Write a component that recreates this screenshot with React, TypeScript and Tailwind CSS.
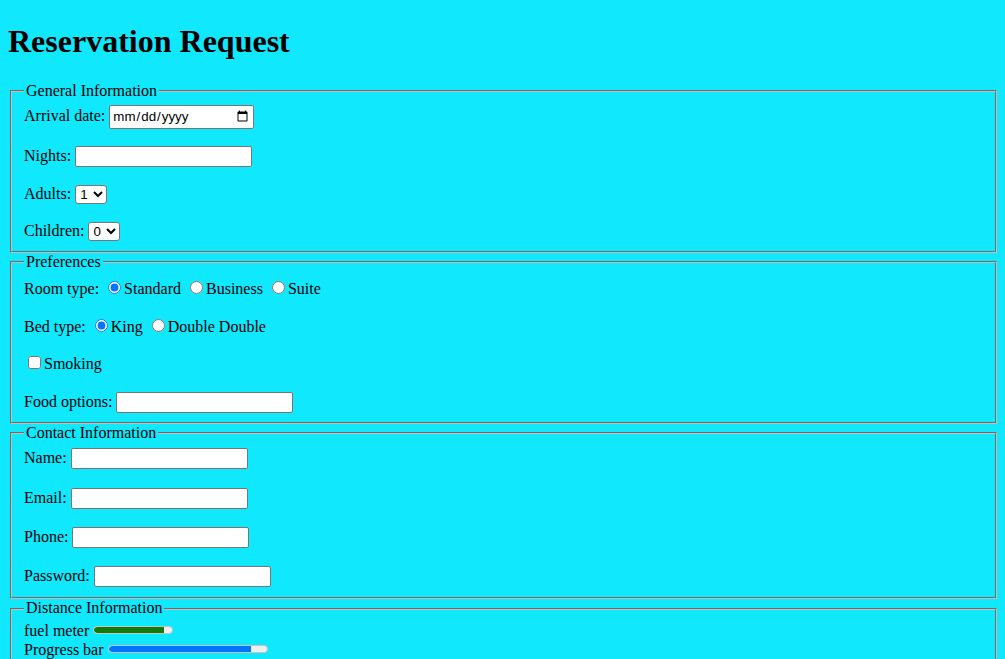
import React from 'react';

const textInput =
  "h-[21px] w-[177px] rounded-[2px] border border-[#767676] bg-white px-[2px] py-px align-baseline font-['Liberation_Sans',Arial,sans-serif] text-[13.333px]";
const selectBox =
  "h-[19px] w-[32px] rounded-[3px] border border-[#767676] bg-white align-baseline font-['Liberation_Sans',Arial,sans-serif] text-[13.333px]";
const fieldsetCls = "ml-[2px] border-2 border-[#c0c0c0] [border-style:groove] px-3";
const radioCls = "mt-[3px] mr-[3px] ml-[5px] align-baseline";

// the empty line left by <br><br> between rows
const Blank = ({ h = 'h-[18.4px]' }: { h?: string }) => <div className={h} />;

// meter / progress drawn as plain bars, native look
const Bar = ({ width, fill, pct }: { width: string; fill: string; pct: number }) => (
  <span
    className={`inline-block h-[8px] ${width} overflow-hidden rounded-full border border-[#c4c4c4] bg-[#efefef] align-[2px]`}
  >
    <span className={`block h-full rounded-l-full ${fill}`} style={{ width: `${pct}%` }} />
  </span>
);

export default function App() {
  return (
    <div className="min-h-screen bg-[#10e8fe] px-2 pt-[23.44px] font-['Liberation_Serif','Times_New_Roman',serif] text-base leading-normal text-black">
      <h1 className="mb-[21.44px] text-[32px] font-bold leading-[1.15]">Reservation Request</h1>
      <form className="leading-[1.15]">
        <fieldset className={`${fieldsetCls} pt-[4.6px] pb-[10px]`}>
          <legend className="px-[2px]">General Information</legend>
          <div>
            <label>Arrival date: </label>
            <input
              type="date"
              className="h-[24px] w-[145px] rounded-[2px] border border-[#767676] bg-white px-[2px] align-baseline font-['Liberation_Sans',Arial,sans-serif] text-[13.333px]"
            />
          </div>
          <Blank h="h-[17.4px]" />
          <div>
            <label>Nights: </label>
            <input type="text" className={textInput} />
          </div>
          <Blank />
          <div>
            <label>Adults: </label>
            <select className={selectBox} defaultValue="1">
              <option>1</option>
              <option>2</option>
              <option>3</option>
              <option>4</option>
            </select>
          </div>
          <Blank h="h-[17.4px]" />
          <div>
            <label>Children: </label>
            <select className={selectBox} defaultValue="0">
              <option>0</option>
              <option>1</option>
              <option>2</option>
              <option>3</option>
            </select>
          </div>
        </fieldset>

        <fieldset className={`${fieldsetCls} pt-[6.6px] pb-[9px]`}>
          <legend className="px-[2px]">Preferences</legend>
          <div>
            Room type: <input type="radio" name="room" defaultChecked className={radioCls} />Standard{' '}
            <input type="radio" name="room" className={radioCls} />Business{' '}
            <input type="radio" name="room" className={radioCls} />Suite
          </div>
          <Blank h="h-[17.4px]" />
          <div>
            Bed type: <input type="radio" name="bed" defaultChecked className={radioCls} />King{' '}
            <input type="radio" name="bed" className={radioCls} />Double Double
          </div>
          <Blank h="h-[17.4px]" />
          <div>
            <input type="checkbox" className="my-[3px] mr-[3px] ml-[4px] align-baseline" />Smoking
          </div>
          <Blank />
          <div>
            <label>Food options: </label>
            <input type="text" className={textInput} />
          </div>
        </fieldset>

        <fieldset className={`${fieldsetCls} pt-[5.6px] pb-[10px]`}>
          <legend className="px-[2px]">Contact Information</legend>
          <div>
            <label>Name: </label>
            <input type="text" className={textInput} />
          </div>
          <Blank />
          <div>
            <label>Email: </label>
            <input type="email" className={textInput} />
          </div>
          <Blank />
          <div>
            <label>Phone: </label>
            <input type="tel" className={textInput} />
          </div>
          <Blank />
          <div>
            <label>Password: </label>
            <input type="password" className={textInput} />
          </div>
        </fieldset>

        <fieldset className={`${fieldsetCls} pt-[4.6px] pb-[10px]`}>
          <legend className="px-[2px]">Distance Information</legend>
          <div>
            fuel meter <Bar width="w-[80px]" fill="bg-[#107c10]" pct={90} />
          </div>
          <div>
            Progress bar <Bar width="w-[160px]" fill="bg-[#0075ff]" pct={90} />
          </div>
        </fieldset>
      </form>
    </div>
  );
}
